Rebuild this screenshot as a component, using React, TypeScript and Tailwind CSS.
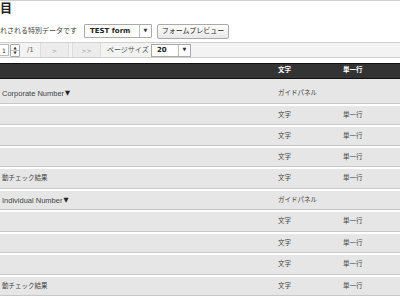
import React from "react";

const jp = { fontFamily: '"DejaVu Sans", "Noto Sans CJK JP", sans-serif' };
const lat = { fontFamily: '"Liberation Sans", "Noto Sans CJK JP", sans-serif' };

type Row = { name: string; type: string; kind: string; h: string };

const rows: Row[] = [
  { name: "Corporate Number", type: "ガイドパネル", kind: "", h: "h-[27px] pt-[5px]" },
  { name: "", type: "文字", kind: "単一行", h: "h-[21px]" },
  { name: "", type: "文字", kind: "単一行", h: "h-[21px]" },
  { name: "", type: "文字", kind: "単一行", h: "h-[21px]" },
  { name: "動チェック結果", type: "文字", kind: "単一行", h: "h-[22px]" },
  { name: "Individual Number", type: "ガイドパネル", kind: "", h: "h-[21px]" },
  { name: "", type: "文字", kind: "単一行", h: "h-[22px]" },
  { name: "", type: "文字", kind: "単一行", h: "h-[21px]" },
  { name: "", type: "文字", kind: "単一行", h: "h-[22px]" },
  { name: "動チェック結果", type: "文字", kind: "単一行", h: "h-[21px]" },
];

export default function App() {
  return (
    <div className="w-[400px] h-[300px] overflow-hidden bg-white text-[#333]" style={jp}>
      <div className="border-t border-[#d0d0d0]" />
      <div className="h-[15px] flex items-center text-[12px] font-bold text-[#222] leading-none">目</div>
      <div className="h-[26px] pt-[4px] flex items-center">
        <span className="text-[7px] text-[#444] w-[84px]">れされる特別データです</span>
        <div className="w-[68px] h-[14px] border border-[#aaa] bg-white flex items-center rounded-[1px]">
          <span className="flex-1 pl-[5px] text-[7px] font-bold text-[#222]">TEST form</span>
          <span className="w-[12px] h-full border-l border-[#bbb] flex items-center justify-center text-[5px] text-[#333]">▼</span>
        </div>
        <div className="ml-[5px] w-[72px] h-[15px] border border-[#aaa] bg-gradient-to-b from-white to-[#e8e8e8] rounded-[2px] flex items-center justify-center text-[7px] text-[#222]">
          フォームプレビュー
        </div>
      </div>
      <div className="border-y border-[#d0d0d0] bg-[#f3f3f3] h-[16px] flex items-center">
        <div className="w-[9px] h-[12px] bg-white border border-[#bbb] border-l-0 text-[6px] flex items-center justify-center">1</div>
        <div className="ml-[1px] w-[10px] h-[13px] border border-[#aaa] bg-white flex flex-col items-center justify-between text-[4px] leading-none rounded-[1px] py-[1px]">
          <span>▲</span>
          <span className="w-full border-t border-[#ccc]" />
          <span>▼</span>
        </div>
        <span className="ml-[7px] w-[13px] text-[7px] text-[#666]">/1</span>
        <div className="w-[29px] h-full bg-[#ececec] border-x border-[#dcdcdc] flex items-center justify-center text-[6px] text-[#999]">&gt;</div>
        <div className="ml-[3px] w-[29px] h-full bg-[#ececec] border-x border-[#dcdcdc] flex items-center justify-center text-[6px] text-[#999]">&gt;&gt;</div>
        <span className="ml-[6px] w-[44px] text-[7px] text-[#555]">ページサイズ</span>
        <div className="w-[40px] h-[13px] border border-[#aaa] bg-white flex items-center">
          <span className="flex-1 pl-[5px] text-[7px] font-bold text-[#222]">20</span>
          <span className="w-[12px] h-full border-l border-[#bbb] flex items-center justify-center text-[5px]">▼</span>
        </div>
      </div>
      <div className="h-[5px]" />
      <div className="h-[16px] bg-[#333] border-y border-[#111] flex items-center text-white text-[6.5px] font-bold">
        <span className="w-[278px]" />
        <span className="w-[65px]">文字</span>
        <span>単一行</span>
      </div>
      {rows.map((r, i) => (
        <div key={i} className={`${r.h} bg-[#e6e6e6] border-b-[2px] border-white flex items-center text-[6.5px] text-[#444] shadow-[inset_0_-1px_0_#c8c8c8]`}>
          <span className="w-[278px] pl-[2px] flex items-center">
            {r.name.startsWith("動") ? (
              r.name
            ) : (
              <span className="text-[7.5px] text-[#444]" style={lat}>{r.name}</span>
            )}
            {(r.name === "Corporate Number" || r.name === "Individual Number") && (
              <span className="ml-[1px] text-[6.5px] text-[#222]">▼</span>
            )}
          </span>
          <span className="w-[65px]">{r.type}</span>
          <span>{r.kind}</span>
        </div>
      ))}
    </div>
  );
}
